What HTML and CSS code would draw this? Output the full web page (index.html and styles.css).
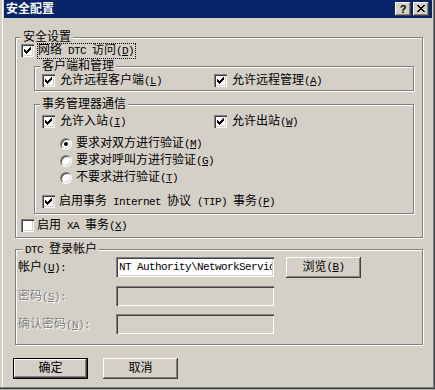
FILE: index.html
```html
<!DOCTYPE html>
<html lang="zh-CN">
<head>
<meta charset="utf-8">
<title>安全配置</title>
<link rel="stylesheet" href="styles.css">
</head>
<body>
<div class="window">
  <div class="titlebar">
    <span class="title">安全配置</span>
    <span class="tbtn help">?</span>
    <span class="tbtn close"><svg width="16" height="14" viewBox="0 0 16 14" shape-rendering="crispEdges"><path d="M4 3h2v1H4zM10 3h2v1h-2zM5 4h2v1H5zM9 4h2v1H9zM6 5h4v1H6zM7 6h2v1H7zM6 7h4v1H6zM5 8h2v1H5zM9 8h2v1H9zM4 9h2v1H4zM10 9h2v1h-2z"/></svg></span>
  </div>
  <div class="body">
    <div class="group g-main">
      <div class="legend">安全设置</div>
      <div class="row r-outer r-net">
        <span class="cb"><svg width="13" height="13" viewBox="0 0 13 13" shape-rendering="crispEdges"><path d="M3 5h1v3H3zM4 6h1v3H4zM5 7h1v3H5zM6 6h1v3H6zM7 5h1v3H7zM8 4h1v3H8zM9 3h1v3H9z"/></svg></span>
        <span class="lbl focus">网络<span class="h"> DTC </span>访问<span class="h">(<u>D</u>)</span></span>
      </div>
      <div class="group sub sub1">
        <div class="legend">客户端和管理</div>
        <div class="row pair">
          <span class="item">
            <span class="cb"><svg width="13" height="13" viewBox="0 0 13 13" shape-rendering="crispEdges"><path d="M3 5h1v3H3zM4 6h1v3H4zM5 7h1v3H5zM6 6h1v3H6zM7 5h1v3H7zM8 4h1v3H8zM9 3h1v3H9z"/></svg></span>
            <span class="lbl">允许远程客户端<span class="h">(<u>L</u>)</span></span>
          </span>
          <span class="item">
            <span class="cb"><svg width="13" height="13" viewBox="0 0 13 13" shape-rendering="crispEdges"><path d="M3 5h1v3H3zM4 6h1v3H4zM5 7h1v3H5zM6 6h1v3H6zM7 5h1v3H7zM8 4h1v3H8zM9 3h1v3H9z"/></svg></span>
            <span class="lbl">允许远程管理<span class="h">(<u>A</u>)</span></span>
          </span>
        </div>
      </div>
      <div class="group sub sub2">
        <div class="legend">事务管理器通信</div>
        <div class="row pair p-in">
          <span class="item">
            <span class="cb"><svg width="13" height="13" viewBox="0 0 13 13" shape-rendering="crispEdges"><path d="M3 5h1v3H3zM4 6h1v3H4zM5 7h1v3H5zM6 6h1v3H6zM7 5h1v3H7zM8 4h1v3H8zM9 3h1v3H9z"/></svg></span>
            <span class="lbl">允许入站<span class="h">(<u>I</u>)</span></span>
          </span>
          <span class="item">
            <span class="cb"><svg width="13" height="13" viewBox="0 0 13 13" shape-rendering="crispEdges"><path d="M3 5h1v3H3zM4 6h1v3H4zM5 7h1v3H5zM6 6h1v3H6zM7 5h1v3H7zM8 4h1v3H8zM9 3h1v3H9z"/></svg></span>
            <span class="lbl">允许出站<span class="h">(<u>W</u>)</span></span>
          </span>
        </div>
        <div class="radios">
          <div class="rrow"><span class="radio on"></span><span class="lbl">要求对双方进行验证<span class="h">(<u>M</u>)</span></span></div>
          <div class="rrow"><span class="radio"></span><span class="lbl">要求对呼叫方进行验证<span class="h">(<u>G</u>)</span></span></div>
          <div class="rrow"><span class="radio"></span><span class="lbl">不要求进行验证<span class="h">(<u>T</u>)</span></span></div>
        </div>
        <div class="row pair p-tip">
          <span class="item">
            <span class="cb"><svg width="13" height="13" viewBox="0 0 13 13" shape-rendering="crispEdges"><path d="M3 5h1v3H3zM4 6h1v3H4zM5 7h1v3H5zM6 6h1v3H6zM7 5h1v3H7zM8 4h1v3H8zM9 3h1v3H9z"/></svg></span>
            <span class="lbl">启用事务<span class="h"> Internet </span>协议<span class="h"> (TIP) </span>事务<span class="h">(<u>P</u>)</span></span>
          </span>
        </div>
      </div>
      <div class="row r-outer r-xa">
        <span class="cb"></span>
        <span class="lbl">启用<span class="h"> XA </span>事务<span class="h">(<u>X</u>)</span></span>
      </div>
    </div>

    <div class="group g-dtc">
      <div class="legend"><span class="h">DTC </span>登录帐户</div>
      <div class="frow f1">
        <span class="flbl">帐户<span class="h">(<u>U</u>):</span></span>
        <input class="edit" type="text" value="NT Authority\NetworkService">
        <span class="btn browse">浏览<span class="h">(<u>B</u>)</span></span>
      </div>
      <div class="frow">
        <span class="flbl dis">密码<span class="h">(<u>S</u>):</span></span>
        <input class="edit" type="text" disabled>
      </div>
      <div class="frow">
        <span class="flbl dis">确认密码<span class="h">(<u>N</u>):</span></span>
        <input class="edit" type="text" disabled>
      </div>
    </div>

    <div class="buttons">
      <span class="btn default">确定</span>
      <span class="btn">取消</span>
    </div>
  </div>
</div>
</body>
</html>
```

FILE: styles.css
```css
* { box-sizing: border-box; }
html, body { margin: 0; padding: 0; }
body {
  width: 435px;
  height: 390px;
  overflow: hidden;
  background: #a8a8a8;
  font-family: "Liberation Sans", "Noto Sans CJK SC", sans-serif;
  font-size: 12px;
  line-height: 13px;
  color: #000;
}
.h {
  font-family: "Liberation Mono", monospace;
  font-size: 11px;
  letter-spacing: -0.6px;
}
u { text-underline-offset: 1px; }

.window {
  width: 435px;
  height: 389px;
  background: #d4d0c8;
  box-shadow: inset -1px -1px #404040, inset -2px -2px #808080, inset 2px 0 #d4d0c8, inset 3px 0 #fff;
}

.titlebar {
  display: flex;
  align-items: center;
  height: 18px;
  margin: 0 3px 0 4px;
  padding: 0 3px 0 2px;
  background: #0a246a;
}
.title {
  flex: 1;
  color: #fff;
  font-weight: bold;
  font-size: 12px;
  line-height: 18px;
}
.tbtn {
  width: 16px;
  height: 14px;
  display: flex;
  align-items: center;
  justify-content: center;
  background: #d4d0c8;
  box-shadow: inset -1px -1px #404040, inset 1px 1px #fff, inset -2px -2px #808080;
}
.tbtn svg { display: block; }
.help {
  margin-right: 2px;
  font-family: "Liberation Sans", sans-serif;
  font-weight: bold;
  font-size: 11px;
  line-height: 14px;
}

.body { padding: 19px 12px 0 15px; }

.group {
  border: 1px solid #808080;
  box-shadow: inset 1px 1px #fff, 1px 1px #fff;
}
.legend {
  width: fit-content;
  height: 13px;
  margin: -7px 0 0 5px;
  padding: 0 2px;
  background: #d4d0c8;
  line-height: 13px;
  white-space: pre;
}
.g-main { padding-bottom: 4px; }

.row {
  display: flex;
  align-items: center;
  height: 15px;
}
.lbl { white-space: pre; line-height: 13px; }
.r-outer { padding-left: 5px; }
.r-outer .lbl { margin-left: 3px; }
.r-net { margin-top: -1px; }
.focus {
  border: 1px dotted #000;
  padding-right: 1px;
}
.r-xa { margin-top: 4px; }
.r-xa .lbl { margin-left: 3px; }

.cb {
  flex: none;
  width: 13px;
  height: 13px;
  background: #fff;
  box-shadow: inset 1px 1px #808080, inset 2px 2px #404040, inset -1px -1px #fff, inset -2px -2px #d4d0c8;
}
.cb svg { display: block; }

.sub { margin: 8px 8px 0 18px; }
.sub1 { padding-bottom: 2px; }
.sub2 { margin-top: 13px; padding-bottom: 4px; }
.pair { padding-left: 7px; }
.item { display: flex; align-items: center; width: 172px; }
.item .lbl { margin-left: 5px; }
.p-in { margin-top: 3px; }
.p-tip { margin-top: 8px; }
.p-tip .lbl { margin-left: 4px; }

.radios { margin-top: 6px; padding-left: 25px; }
.rrow { display: flex; align-items: center; height: 17px; }
.rrow .lbl { margin-left: 4px; }
.radio {
  flex: none;
  width: 12px;
  height: 12px;
  border-radius: 50%;
  background: #fff;
  border: 1px solid;
  border-color: #808080 #fff #fff #808080;
  box-shadow: inset 1px 1px #404040, inset -1px -1px #d4d0c8;
  display: flex;
  align-items: center;
  justify-content: center;
}
.radio.on::after {
  content: "";
  width: 4px;
  height: 4px;
  border-radius: 50%;
  background: #000;
}

.g-dtc { margin-top: 11px; padding: 0 0 10px 2px; }
.frow {
  display: flex;
  align-items: flex-start;
  height: 20px;
  margin-top: 8px;
}
.frow.f1 { margin-top: 1px; height: 21px; }
.flbl {
  width: 98px;
  line-height: 20px;
  white-space: pre;
}
.flbl.dis { color: #808080; text-shadow: 1px 1px #fff; }
.edit {
  appearance: none;
  -webkit-appearance: none;
  width: 158px;
  height: 20px;
  margin: 0;
  border: none;
  outline: none;
  padding: 0 2px 0 3px;
  background: #fff;
  font-family: "Liberation Mono", monospace;
  font-size: 11px;
  letter-spacing: -0.6px;
  color: #000;
  box-shadow: inset 1px 1px #808080, inset 2px 2px #404040, inset -1px -1px #fff, inset -2px -2px #d4d0c8;
}
.edit:disabled { background: #d4d0c8; }

.btn {
  display: flex;
  align-items: center;
  justify-content: center;
  width: 75px;
  height: 21px;
  background: #d4d0c8;
  white-space: pre;
  box-shadow: inset -1px -1px #404040, inset 1px 1px #fff, inset -2px -2px #808080;
}
.browse { margin-left: 12px; }
.btn.default {
  border: 1px solid #000;
}

.buttons {
  display: flex;
  gap: 15px;
  margin: 13px 0 0 -2px;
}
```
